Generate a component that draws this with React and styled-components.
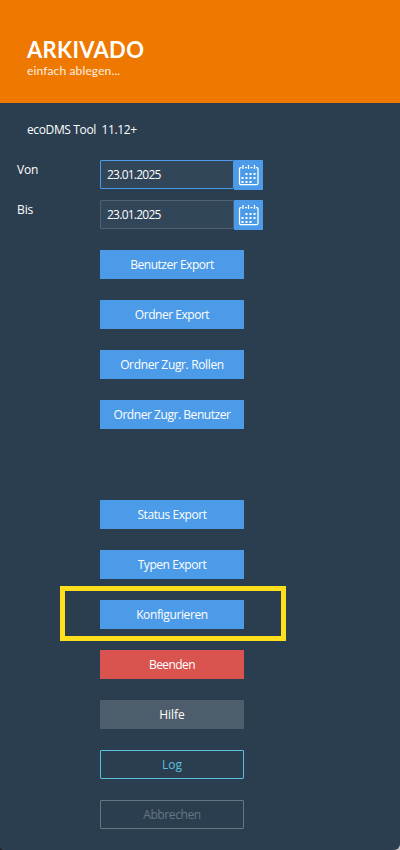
import React from "react";
import styled, { createGlobalStyle, css } from "styled-components";

const GlobalStyle = createGlobalStyle`
  *, *::after { box-sizing: border-box; }
  body { margin: 0; background: #1c1e22; }
`;

const Window = styled.main`
  width: 400px;
  height: 850px;
  overflow: hidden;
  background: #2b3e50;
  border-radius: 0 0 6px 4px;
  color: #fff;
  font: 12px/16px "Open Sans", "Noto Sans", sans-serif;
`;

const Backdrop = styled.div`
  background: linear-gradient(90deg, #1c1e22 50%, #c4c8cb 50%);
`;

const Header = styled.header`
  height: 103px;
  padding: 36px 0 0 27px;
  background: #ef7800;
`;

const Brand = styled.h1`
  margin: 0 0 1px;
  font: 700 22px/27px Lato, sans-serif;
  letter-spacing: 0.3px;
`;

const Tagline = styled.p`
  margin: 0;
  color: #fff0e0;
  font: 400 12px/14px Lato, sans-serif;
  letter-spacing: 0.13px;
`;

const Title = styled.p`
  margin: 0;
  padding: 19px 0 22px 27px;
  white-space: pre;
  letter-spacing: ${(p) => p.$spacing}px;
`;

const Field = styled.div`
  display: grid;
  grid-template-columns: 83px 134px 29px;
  height: 40px;
  padding-left: 17px;
  align-items: start;
`;

const Label = styled.label`
  padding-top: 2px;
  letter-spacing: ${(p) => p.$spacing}px;
`;

const DateInput = styled.input`
  width: 134px;
  height: 29px;
  padding: 0 6px;
  border: 1px solid ${(p) => (p.$active ? "#4c9be8" : "#526170")};
  border-radius: 1px;
  outline: none;
  background: #32465a;
  color: #fff;
  font: inherit;
  letter-spacing: -0.75px;
`;

const PickerButton = styled.button`
  display: grid;
  place-items: center;
  width: 29px;
  height: 30px;
  padding: 0;
  border: 0;
  background: #4c9be8;
`;

const Actions = styled.div`
  display: flex;
  flex-direction: column;
  gap: 21px;
  width: 144px;
  margin: 10px 0 0 100px;
`;

const variants = {
  primary: css`background: #4c9be8; border-color: #4c9be8;`,
  danger: css`background: #d9534f; border-color: #d9534f;`,
  secondary: css`background: #4e5d6c; border-color: #4e5d6c;`,
  outline: css`border-color: #5bc0de; color: #5bc0de; border-radius: 1px;`,
  disabled: css`border-color: #687684; color: #687684; border-radius: 1px;`,
};

const Action = styled.button`
  height: 29px;
  flex: none;
  padding: 1px 0 0;
  border: 1px solid transparent;
  background: transparent;
  color: #fff;
  font: inherit;
  white-space: nowrap;
  letter-spacing: ${(p) => p.$spacing ?? 0}px;
  margin-top: ${(p) => (p.$separated ? "50px" : 0)};
  ${(p) => variants[p.$variant]}
`;

const Highlighted = styled.div`
  position: relative;
  display: grid;
  &::after {
    content: "";
    position: absolute;
    top: -14px;
    left: -40px;
    width: 226px;
    height: 55px;
    border: 5px solid #ffdf1b;
    pointer-events: none;
  }
`;

const dots = [
  [12, 13], [16, 13], [20, 13],
  [8, 17], [12, 17], [16, 17], [20, 17],
  [8, 21], [12, 21], [16, 21],
];

function CalendarIcon() {
  return (
    <svg width="29" height="30" viewBox="0 0 29 30" fill="none" stroke="#fff">
      <path d="M7.5 7.5h-1q-1 0-1 1v15q0 1 1 1h16q1.5 0 1.5-1v-15q0-1-1-1h-1M11 7.5h2M16.5 7.5h2" strokeWidth="1.25" />
      <path d="M9 5v4M14.5 5v4M20.5 5v4" strokeWidth="1.25" />
      {dots.map(([x, y]) => (
        <rect key={`${x}-${y}`} x={x - 0.5} y={y} width="2" height="2" fill="#fff" stroke="none" />
      ))}
    </svg>
  );
}

function DateField({ label, spacing, active }) {
  return (
    <Field>
      <Label htmlFor={label} $spacing={spacing}>{label}</Label>
      <DateInput id={label} defaultValue="23.01.2025" $active={active} />
      <PickerButton aria-label={`${label} Datum`}><CalendarIcon /></PickerButton>
    </Field>
  );
}

export default function App() {
  return (
    <Backdrop>
      <GlobalStyle />
      <Window>
        <Header>
          <Brand>ARKIVADO</Brand>
          <Tagline>einfach ablegen...</Tagline>
        </Header>
        <Title $spacing={-0.37}>{"ecoDMS Tool  11.12+"}</Title>
        <DateField label="Von" spacing={-0.2} active />
        <DateField label="Bis" spacing={-0.1} />
        <Actions>
          <Action $variant="primary" $spacing={-0.46}>Benutzer Export</Action>
          <Action $variant="primary" $spacing={-0.47}>Ordner Export</Action>
          <Action $variant="primary" $spacing={-0.35}>Ordner Zugr. Rollen</Action>
          <Action $variant="primary" $spacing={-0.45}>Ordner Zugr. Benutzer</Action>
          <Action $variant="primary" $separated $spacing={-0.42}>Status Export</Action>
          <Action $variant="primary" $spacing={-0.43}>Typen Export</Action>
          <Highlighted><Action $variant="primary" $spacing={-0.37}>Konfigurieren</Action></Highlighted>
          <Action $variant="danger" $spacing={-0.6}>Beenden</Action>
          <Action $variant="secondary" $spacing={-0.05}>Hilfe</Action>
          <Action $variant="outline">Log</Action>
          <Action $variant="disabled" $spacing={-0.4} disabled>Abbrechen</Action>
        </Actions>
      </Window>
    </Backdrop>
  );
}
